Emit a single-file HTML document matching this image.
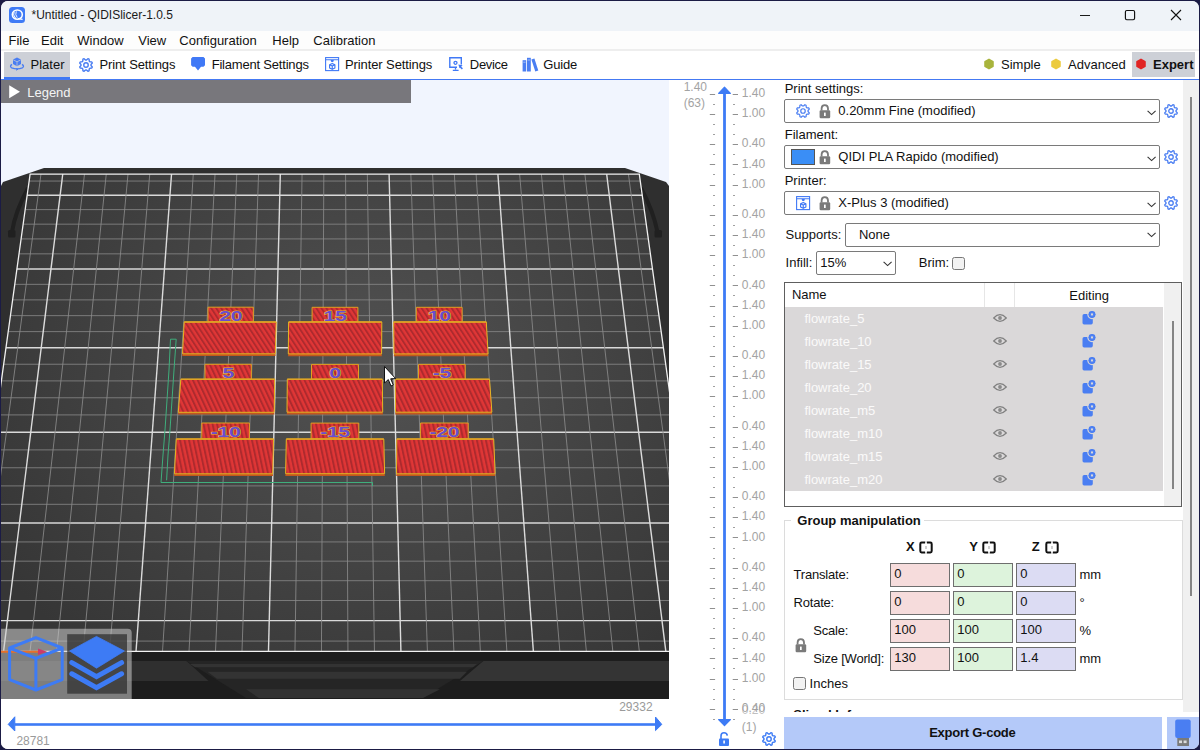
<!DOCTYPE html><html><head><meta charset="utf-8"><style>
html,body{margin:0;padding:0;width:1200px;height:750px;overflow:hidden;background:#1b1b45;}
#win{position:absolute;left:1px;top:1px;width:1198px;height:748px;border-radius:7px;overflow:hidden;background:#ffffff;}
.t{position:absolute;white-space:nowrap;line-height:1;font-family:"Liberation Sans",sans-serif;}
svg{position:absolute;overflow:visible}
</style></head><body><div id="win">
<div style="position:absolute;left:-1px;top:-1px;width:1200px;height:750px;">
<div style="position:absolute;left:0px;top:0px;width:1200px;height:31px;background:#eff3f8;"></div>
<svg style="left:9px;top:7px" width="16" height="16" viewBox="0 0 16 16">
<rect x="0" y="0" width="16" height="16" rx="3.5" fill="#3f7bf6"/>
<ellipse cx="8.3" cy="7.6" rx="5" ry="4.6" fill="none" stroke="#fff" stroke-width="1.6"/>
<path d="M5.2 4.6 Q3.4 8 6.6 11.2" fill="none" stroke="#fff" stroke-width="1"/>
<path d="M7.3 4.3 Q5.8 7.6 8.2 10.6" fill="none" stroke="#fff" stroke-width="0.9"/>
<path d="M9 11.7 L13.6 12.3" stroke="#fff" stroke-width="1.2"/>
</svg>
<div class="t" style="left:31.5px;top:9.24px;font-size:12px;color:#1a1a1a;font-weight:normal;">*Untitled - QIDISlicer-1.0.5</div>
<svg style="left:1078px;top:7px" width="18" height="16"><path d="M2 8.5 H12" stroke="#1a1a1a" stroke-width="1"/></svg>
<svg style="left:1124px;top:9px" width="14" height="14"><rect x="1.4" y="1.5" width="9.2" height="9.2" rx="1.4" fill="none" stroke="#111" stroke-width="1.15"/></svg>
<svg style="left:1170px;top:9px" width="14" height="14"><path d="M1 1 L11 11 M11 1 L1 11" stroke="#111" stroke-width="1.1"/></svg>
<div style="position:absolute;left:0px;top:31px;width:1200px;height:18px;background:#fdfdfd;"></div>
<div style="position:absolute;left:0px;top:49px;width:1200px;height:2px;background:#eeeeee;"></div>
<div class="t" style="left:8.5px;top:33.80px;font-size:13px;color:#111111;font-weight:normal;">File</div>
<div class="t" style="left:41.0px;top:33.80px;font-size:13px;color:#111111;font-weight:normal;">Edit</div>
<div class="t" style="left:77.3px;top:33.80px;font-size:13px;color:#111111;font-weight:normal;">Window</div>
<div class="t" style="left:138.3px;top:33.80px;font-size:13px;color:#111111;font-weight:normal;">View</div>
<div class="t" style="left:179.3px;top:33.80px;font-size:13px;color:#111111;font-weight:normal;">Configuration</div>
<div class="t" style="left:272.3px;top:33.80px;font-size:13px;color:#111111;font-weight:normal;">Help</div>
<div class="t" style="left:313.3px;top:33.80px;font-size:13px;color:#111111;font-weight:normal;">Calibration</div>
<div style="position:absolute;left:0px;top:51px;width:1200px;height:28px;background:#ffffff;"></div>
<div style="position:absolute;left:4px;top:52px;width:66px;height:25px;background:#cdd0d7;"></div>
<div style="position:absolute;left:4px;top:77px;width:66px;height:2px;background:#3e78f4;"></div>
<div style="position:absolute;left:0px;top:79px;width:1200px;height:1px;background:#4479f3;"></div>
<svg style="left:8px;top:56px" width="18" height="16" viewBox="0 0 18 16">
<path d="M9 1.5 L13 3.6 L13 8 L9 10.2 L5 8 L5 3.6 Z" fill="#4a7ef2"/>
<path d="M9 5.8 L9 10 M5.2 3.8 L9 5.8 L12.8 3.8" stroke="#cdd0d7" stroke-width="0.7" fill="none"/>
<path d="M4 8.4 Q1.2 10.2 3.6 11.8 Q9 14 14.4 11.8 Q16.8 10.2 14 8.4" fill="none" stroke="#4a7ef2" stroke-width="1.3"/>
<path d="M8 12.6 L10 13.2 L8 14.2" fill="none" stroke="#4a7ef2" stroke-width="1"/>
</svg>
<div class="t" style="left:30.5px;top:58.00px;font-size:13px;color:#111111;font-weight:normal;">Plater</div>
<svg style="left:79px;top:57.5px" width="14" height="14" viewBox="0 0 14 14"><path d="M13.30 8.91 L12.80 10.10 L10.90 10.20 L10.20 10.90 L10.10 12.80 L8.91 13.30 L7.49 12.02 L6.51 12.02 L5.09 13.30 L3.90 12.80 L3.80 10.90 L3.10 10.20 L1.20 10.10 L0.70 8.91 L1.98 7.49 L1.98 6.51 L0.70 5.09 L1.20 3.90 L3.10 3.80 L3.80 3.10 L3.90 1.20 L5.09 0.70 L6.51 1.98 L7.49 1.98 L8.91 0.70 L10.10 1.20 L10.20 3.10 L10.90 3.80 L12.80 3.90 L13.30 5.09 L12.02 6.51 L12.02 7.49Z" fill="none" stroke="#4a7ef2" stroke-width="1.4" stroke-linejoin="round"/><circle cx="7.0" cy="7.0" r="2.24" fill="none" stroke="#4a7ef2" stroke-width="1.4"/></svg>
<div class="t" style="left:99.4px;top:58.00px;font-size:13px;color:#111111;font-weight:normal;letter-spacing:-0.1px;">Print Settings</div>
<svg style="left:190px;top:56px" width="16" height="16" viewBox="0 0 16 16">
<path d="M2.6 1 H13.5 L15 2.5 V9.2 L13.5 10.7 H11 L8 14.6 L5 10.7 H2.6 L1.1 9.2 V2.5 Z" fill="#4079f6"/>
</svg>
<div class="t" style="left:211.7px;top:58.00px;font-size:13px;color:#111111;font-weight:normal;letter-spacing:-0.2px;">Filament Settings</div>
<svg style="left:325px;top:57px" width="15" height="15" viewBox="0 0 15 15">
<rect x="0.6" y="0.6" width="13" height="13" fill="none" stroke="#4079f6" stroke-width="1.1"/>
<path d="M0.6 2.7 H13.6" stroke="#4079f6" stroke-width="1.1"/>
<path d="M5.6 3 H8.9 L8.2 5.1 H6.3 Z" fill="#4079f6"/>
<path d="M7.25 6.4 L9.9 7.7 V10.9 L7.25 12.3 L4.6 10.9 V7.7 Z M4.6 7.7 L7.25 9.1 L9.9 7.7 M7.25 9.1 V12.3" fill="none" stroke="#4079f6" stroke-width="1.15" stroke-linejoin="round"/>
</svg>
<div class="t" style="left:345.0px;top:58.00px;font-size:13px;color:#111111;font-weight:normal;letter-spacing:-0.1px;">Printer Settings</div>
<svg style="left:449px;top:56px" width="16" height="16" viewBox="0 0 16 16">
<path d="M8 11.2 H0.8 V1.7 H12.3 V8.6" fill="none" stroke="#4079f6" stroke-width="1.4"/>
<circle cx="6.5" cy="6.8" r="1.5" fill="none" stroke="#4079f6" stroke-width="1.3"/>
<path d="M9.3 8.4 L13.6 9.3 L10.6 12.2 Z" fill="#4079f6"/>
<path d="M11 10.6 L13.4 12.9" stroke="#4079f6" stroke-width="1.5"/>
<path d="M6.5 11.2 V13.6 M3.8 14.3 H9.6" stroke="#4079f6" stroke-width="1.3"/>
</svg>
<div class="t" style="left:469.8px;top:58.00px;font-size:13px;color:#111111;font-weight:normal;letter-spacing:-0.3px;">Device</div>
<svg style="left:522px;top:57px" width="17" height="15" viewBox="0 0 17 15">
<rect x="0.6" y="3.2" width="3.6" height="11.3" fill="#4a7ef2"/>
<rect x="5" y="0.8" width="3.8" height="13.7" fill="#4a7ef2"/>
<path d="M9.4 2.4 L12.4 1.5 L16.3 13.6 L13.3 14.5 Z" fill="#4a7ef2"/>
<path d="M1.2 5.2 H3.6 M5.6 3 H8.2" stroke="#b8ccf8" stroke-width="0.8"/>
</svg>
<div class="t" style="left:543.3px;top:58.00px;font-size:13px;color:#111111;font-weight:normal;letter-spacing:-0.2px;">Guide</div>
<div style="position:absolute;left:1132px;top:52px;width:63px;height:25px;background:#cdd0d7;"></div>
<svg style="left:0;top:0" width="1200" height="750"><polygon points="992.98,66.30 989.00,68.60 985.02,66.30 985.02,61.70 989.00,59.40 992.98,61.70" fill="#a8b43c" stroke="#a8b43c" stroke-width="1.6" stroke-linejoin="round"/></svg>
<div class="t" style="left:1001.0px;top:58.00px;font-size:13px;color:#111111;font-weight:normal;">Simple</div>
<svg style="left:0;top:0" width="1200" height="750"><polygon points="1059.98,66.30 1056.00,68.60 1052.02,66.30 1052.02,61.70 1056.00,59.40 1059.98,61.70" fill="#eccb3e" stroke="#eccb3e" stroke-width="1.6" stroke-linejoin="round"/></svg>
<div class="t" style="left:1068.0px;top:58.00px;font-size:13px;color:#111111;font-weight:normal;">Advanced</div>
<svg style="left:0;top:0" width="1200" height="750"><polygon points="1144.98,66.30 1141.00,68.60 1137.02,66.30 1137.02,61.70 1141.00,59.40 1144.98,61.70" fill="#e12424" stroke="#e12424" stroke-width="1.6" stroke-linejoin="round"/></svg>
<div class="t" style="left:1153.0px;top:58.00px;font-size:13px;color:#111111;font-weight:bold;">Expert</div>
<div style="position:absolute;left:1px;top:80px;width:668px;height:619px;background:#f1f5fe;"></div>
<svg style="left:1px;top:80px" width="668" height="619" viewBox="1 80 668 619"><defs>
<radialGradient id="bedg" cx="375" cy="370" r="440" gradientUnits="userSpaceOnUse" gradientTransform="translate(375 370) scale(1 0.85) translate(-375 -370)">
<stop offset="0" stop-color="#525252"/><stop offset="0.45" stop-color="#454545"/><stop offset="1" stop-color="#363636"/></radialGradient>
<clipPath id="cvclip"><rect x="1" y="80" width="668" height="619"/></clipPath>
<pattern id="strp0" width="4.2" height="10" patternUnits="userSpaceOnUse" patternTransform="rotate(-33)"><rect width="4.2" height="10" fill="#e03636"/><rect x="0" width="1.89" height="10" fill="#ad2a2e"/></pattern><pattern id="strp1" width="4.4" height="10" patternUnits="userSpaceOnUse" patternTransform="rotate(-25)"><rect width="4.4" height="10" fill="#e03636"/><rect x="0" width="1.98" height="10" fill="#ad2a2e"/></pattern><pattern id="strp2" width="4.4" height="10" patternUnits="userSpaceOnUse" patternTransform="rotate(-12)"><rect width="4.4" height="10" fill="#e03636"/><rect x="0" width="1.98" height="10" fill="#ad2a2e"/></pattern></defs><g clip-path="url(#cvclip)"><polygon points="44,168 625,168 666,182 669,186 669,699 1,699 1,186 3,182" fill="#2f2f2f"/><polygon points="30.1,174.1 639.3,174.1 705.6,651.4 -36.2,651.4" fill="url(#bedg)"/><path d="M28 188 Q22 199 17.5 211 Q13.5 222 12 232" fill="none" stroke="#202020" stroke-width="4"/><rect x="8" y="230" width="7.5" height="7.5" rx="1.5" fill="#202020"/><path d="M641 188 Q647 199 651.5 211 Q655.5 222 657.5 232" fill="none" stroke="#202020" stroke-width="4"/><rect x="654.5" y="230" width="7.5" height="7.5" rx="1.5" fill="#202020"/><line x1="29.13" y1="181.06" x2="640.27" y2="181.06" stroke="#858585" stroke-width="0.85"/><line x1="27.16" y1="195.24" x2="642.24" y2="195.24" stroke="#d9d9d9" stroke-width="1.4"/><line x1="25.17" y1="209.61" x2="644.23" y2="209.61" stroke="#858585" stroke-width="0.85"/><line x1="23.15" y1="224.16" x2="646.25" y2="224.16" stroke="#858585" stroke-width="0.85"/><line x1="21.10" y1="238.91" x2="648.30" y2="238.91" stroke="#858585" stroke-width="0.85"/><line x1="19.03" y1="253.85" x2="650.37" y2="253.85" stroke="#858585" stroke-width="0.85"/><line x1="16.93" y1="268.99" x2="652.47" y2="268.99" stroke="#d9d9d9" stroke-width="1.4"/><line x1="14.80" y1="284.34" x2="654.60" y2="284.34" stroke="#858585" stroke-width="0.85"/><line x1="12.64" y1="299.89" x2="656.76" y2="299.89" stroke="#858585" stroke-width="0.85"/><line x1="10.45" y1="315.65" x2="658.95" y2="315.65" stroke="#858585" stroke-width="0.85"/><line x1="8.23" y1="331.62" x2="661.17" y2="331.62" stroke="#858585" stroke-width="0.85"/><line x1="5.98" y1="347.82" x2="663.42" y2="347.82" stroke="#d9d9d9" stroke-width="1.4"/><line x1="3.70" y1="364.24" x2="665.70" y2="364.24" stroke="#858585" stroke-width="0.85"/><line x1="1.39" y1="380.90" x2="668.01" y2="380.90" stroke="#858585" stroke-width="0.85"/><line x1="-0.95" y1="397.78" x2="670.35" y2="397.78" stroke="#858585" stroke-width="0.85"/><line x1="-3.33" y1="414.91" x2="672.73" y2="414.91" stroke="#858585" stroke-width="0.85"/><line x1="-5.74" y1="432.28" x2="675.14" y2="432.28" stroke="#d9d9d9" stroke-width="1.4"/><line x1="-8.19" y1="449.89" x2="677.59" y2="449.89" stroke="#858585" stroke-width="0.85"/><line x1="-10.67" y1="467.77" x2="680.07" y2="467.77" stroke="#858585" stroke-width="0.85"/><line x1="-13.19" y1="485.90" x2="682.59" y2="485.90" stroke="#858585" stroke-width="0.85"/><line x1="-15.74" y1="504.30" x2="685.14" y2="504.30" stroke="#858585" stroke-width="0.85"/><line x1="-18.33" y1="522.98" x2="687.73" y2="522.98" stroke="#d9d9d9" stroke-width="1.4"/><line x1="-20.96" y1="541.93" x2="690.36" y2="541.93" stroke="#858585" stroke-width="0.85"/><line x1="-23.63" y1="561.16" x2="693.03" y2="561.16" stroke="#858585" stroke-width="0.85"/><line x1="-26.35" y1="580.69" x2="695.75" y2="580.69" stroke="#858585" stroke-width="0.85"/><line x1="-29.10" y1="600.52" x2="698.50" y2="600.52" stroke="#858585" stroke-width="0.85"/><line x1="-31.89" y1="620.64" x2="701.29" y2="620.64" stroke="#d9d9d9" stroke-width="1.4"/><line x1="-34.73" y1="641.08" x2="704.13" y2="641.08" stroke="#858585" stroke-width="0.85"/><line x1="40.98" y1="174.1" x2="-22.92" y2="651.42" stroke="#8a8a8a" stroke-width="0.85"/><line x1="62.74" y1="174.1" x2="3.57" y2="651.42" stroke="#dcdcdc" stroke-width="1.4"/><line x1="84.49" y1="174.1" x2="30.06" y2="651.42" stroke="#8a8a8a" stroke-width="0.85"/><line x1="106.25" y1="174.1" x2="56.55" y2="651.42" stroke="#8a8a8a" stroke-width="0.85"/><line x1="128.01" y1="174.1" x2="83.04" y2="651.42" stroke="#8a8a8a" stroke-width="0.85"/><line x1="149.76" y1="174.1" x2="109.53" y2="651.42" stroke="#8a8a8a" stroke-width="0.85"/><line x1="171.52" y1="174.1" x2="136.02" y2="651.42" stroke="#dcdcdc" stroke-width="1.4"/><line x1="193.28" y1="174.1" x2="162.51" y2="651.42" stroke="#8a8a8a" stroke-width="0.85"/><line x1="215.04" y1="174.1" x2="189.00" y2="651.42" stroke="#8a8a8a" stroke-width="0.85"/><line x1="236.79" y1="174.1" x2="215.49" y2="651.42" stroke="#8a8a8a" stroke-width="0.85"/><line x1="258.55" y1="174.1" x2="241.98" y2="651.42" stroke="#8a8a8a" stroke-width="0.85"/><line x1="280.31" y1="174.1" x2="268.47" y2="651.42" stroke="#dcdcdc" stroke-width="1.4"/><line x1="302.06" y1="174.1" x2="294.96" y2="651.42" stroke="#8a8a8a" stroke-width="0.85"/><line x1="323.82" y1="174.1" x2="321.45" y2="651.42" stroke="#8a8a8a" stroke-width="0.85"/><line x1="345.58" y1="174.1" x2="347.95" y2="651.42" stroke="#8a8a8a" stroke-width="0.85"/><line x1="367.34" y1="174.1" x2="374.44" y2="651.42" stroke="#8a8a8a" stroke-width="0.85"/><line x1="389.09" y1="174.1" x2="400.93" y2="651.42" stroke="#dcdcdc" stroke-width="1.4"/><line x1="410.85" y1="174.1" x2="427.42" y2="651.42" stroke="#8a8a8a" stroke-width="0.85"/><line x1="432.61" y1="174.1" x2="453.91" y2="651.42" stroke="#8a8a8a" stroke-width="0.85"/><line x1="454.36" y1="174.1" x2="480.40" y2="651.42" stroke="#8a8a8a" stroke-width="0.85"/><line x1="476.12" y1="174.1" x2="506.89" y2="651.42" stroke="#8a8a8a" stroke-width="0.85"/><line x1="497.88" y1="174.1" x2="533.38" y2="651.42" stroke="#dcdcdc" stroke-width="1.4"/><line x1="519.64" y1="174.1" x2="559.87" y2="651.42" stroke="#8a8a8a" stroke-width="0.85"/><line x1="541.39" y1="174.1" x2="586.36" y2="651.42" stroke="#8a8a8a" stroke-width="0.85"/><line x1="563.15" y1="174.1" x2="612.85" y2="651.42" stroke="#8a8a8a" stroke-width="0.85"/><line x1="584.91" y1="174.1" x2="639.34" y2="651.42" stroke="#8a8a8a" stroke-width="0.85"/><line x1="606.66" y1="174.1" x2="665.83" y2="651.42" stroke="#dcdcdc" stroke-width="1.4"/><line x1="628.42" y1="174.1" x2="692.32" y2="651.42" stroke="#8a8a8a" stroke-width="0.85"/><polyline points="-36.2,651.4 30.1,174.1 639.3,174.1 705.6,651.4" fill="none" stroke="#f0f0f0" stroke-width="1.3"/><rect x="1" y="652.0" width="668" height="47.6" fill="#1d1d1d"/><line x1="1" y1="651.42" x2="669" y2="651.42" stroke="#f2f2f2" stroke-width="1.4"/><polygon points="1,661 186.5,661 208.5,681 1,681" fill="#2f2f2f"/><polygon points="483.3,661 669,661 669,681 460,681" fill="#343434"/><polygon points="186.5,661 483.3,661 422.8,698 246,698" fill="#252525"/><polygon points="190,664 477,664 473,667.2 195,667.2" fill="#333333"/><polygon points="207.5,671.8 467,671.8 460,678.8 217,678.8" fill="#333333"/><polygon points="246,689.3 440,689.3 423,698 259,698" fill="#333333"/><polyline points="161,482.5 372.5,482.5 372.5,486" fill="none" stroke="#3fae7c" stroke-width="1"/><polyline points="161,482.5 163,455 165,430 167,400 169,370 170.5,339.2 176.2,339.2 174,370 172,400 170,430 168,455 166.6,480.3" fill="none" stroke="#3fae7c" stroke-width="1"/><polygon points="208,307.2 253.3,307.2 253.3,322 208,322" fill="url(#strp0)" stroke="#e0a020" stroke-width="1"/><polygon points="182.5,353.8 275.3,353.8 275.6,356.1 182.2,356.1" fill="#c4561c"/><polygon points="184.2,322 276.2,322 275.3,353.8 182.5,353.8" fill="url(#strp0)" stroke="#e6b422" stroke-width="1"/><line x1="184.2" y1="322" x2="276.2" y2="322" stroke="#e0a424" stroke-width="1.5"/><text transform="translate(230.7,320.6) scale(1.38,1)" x="0" y="0" text-anchor="middle" font-family="Liberation Sans" font-weight="bold" font-size="15.5" fill="#6a4bcf" stroke="#e3b930" stroke-width="1.1" paint-order="stroke" letter-spacing="-0.3">20</text><polygon points="312.1,307.3 357.9,307.3 357.9,322 312.1,322" fill="url(#strp0)" stroke="#e0a020" stroke-width="1"/><polygon points="288.3,353.9 381.6,353.9 381.90000000000003,356.2 288.0,356.2" fill="#c4561c"/><polygon points="288.6,322 381.8,322 381.6,353.9 288.3,353.9" fill="url(#strp0)" stroke="#e6b422" stroke-width="1"/><line x1="288.6" y1="322" x2="381.8" y2="322" stroke="#e0a424" stroke-width="1.5"/><text transform="translate(335.0,320.6) scale(1.38,1)" x="0" y="0" text-anchor="middle" font-family="Liberation Sans" font-weight="bold" font-size="15.5" fill="#6a4bcf" stroke="#e3b930" stroke-width="1.1" paint-order="stroke" letter-spacing="-0.3">15</text><polygon points="416.3,307.3 462.1,307.3 462.1,322 416.3,322" fill="url(#strp0)" stroke="#e0a020" stroke-width="1"/><polygon points="394,353.9 488.1,353.9 488.40000000000003,356.2 393.7,356.2" fill="#c4561c"/><polygon points="393.7,322 486.3,322 488.1,353.9 394,353.9" fill="url(#strp0)" stroke="#e6b422" stroke-width="1"/><line x1="393.7" y1="322" x2="486.3" y2="322" stroke="#e0a424" stroke-width="1.5"/><text transform="translate(439.2,320.6) scale(1.38,1)" x="0" y="0" text-anchor="middle" font-family="Liberation Sans" font-weight="bold" font-size="15.5" fill="#6a4bcf" stroke="#e3b930" stroke-width="1.1" paint-order="stroke" letter-spacing="-0.3">10</text><polygon points="205,364.3 251.3,364.3 251.3,379.3 205,379.3" fill="url(#strp1)" stroke="#e0a020" stroke-width="1"/><polygon points="178.3,412.3 274.2,412.3 274.5,414.6 178.0,414.6" fill="#c4561c"/><polygon points="180.8,379.3 274.7,379.3 274.2,412.3 178.3,412.3" fill="url(#strp1)" stroke="#e6b422" stroke-width="1"/><line x1="180.8" y1="379.3" x2="274.7" y2="379.3" stroke="#e0a424" stroke-width="1.5"/><text transform="translate(228.2,377.8) scale(1.38,1)" x="0" y="0" text-anchor="middle" font-family="Liberation Sans" font-weight="bold" font-size="15.5" fill="#6a4bcf" stroke="#e3b930" stroke-width="1.1" paint-order="stroke" letter-spacing="-0.3">5</text><polygon points="311.5,364.4 358.5,364.4 358.5,379.3 311.5,379.3" fill="url(#strp1)" stroke="#e0a020" stroke-width="1"/><polygon points="287,412.2 382.7,412.2 383.0,414.5 286.7,414.5" fill="#c4561c"/><polygon points="287.3,379.3 382.3,379.3 382.7,412.2 287,412.2" fill="url(#strp1)" stroke="#e6b422" stroke-width="1"/><line x1="287.3" y1="379.3" x2="382.3" y2="379.3" stroke="#e0a424" stroke-width="1.5"/><text transform="translate(335.0,377.9) scale(1.38,1)" x="0" y="0" text-anchor="middle" font-family="Liberation Sans" font-weight="bold" font-size="15.5" fill="#6a4bcf" stroke="#e3b930" stroke-width="1.1" paint-order="stroke" letter-spacing="-0.3">0</text><polygon points="418.5,364.4 465.2,364.4 465.2,379.3 418.5,379.3" fill="url(#strp1)" stroke="#e0a020" stroke-width="1"/><polygon points="395.5,412.2 491.9,412.2 492.2,414.5 395.2,414.5" fill="#c4561c"/><polygon points="395.2,379.3 489.5,379.3 491.9,412.2 395.5,412.2" fill="url(#strp1)" stroke="#e6b422" stroke-width="1"/><line x1="395.2" y1="379.3" x2="489.5" y2="379.3" stroke="#e0a424" stroke-width="1.5"/><text transform="translate(441.9,377.9) scale(1.38,1)" x="0" y="0" text-anchor="middle" font-family="Liberation Sans" font-weight="bold" font-size="15.5" fill="#6a4bcf" stroke="#e3b930" stroke-width="1.1" paint-order="stroke" letter-spacing="-0.3">-5</text><polygon points="201.8,423 249.4,423 249.4,439.1 201.8,439.1" fill="url(#strp2)" stroke="#e0a020" stroke-width="1"/><polygon points="174.4,473.8 272.7,473.8 273.0,476.1 174.1,476.1" fill="#c4561c"/><polygon points="176.3,439.1 273.5,439.1 272.7,473.8 174.4,473.8" fill="url(#strp2)" stroke="#e6b422" stroke-width="1"/><line x1="176.3" y1="439.1" x2="273.5" y2="439.1" stroke="#e0a424" stroke-width="1.5"/><text transform="translate(225.6,437.1) scale(1.38,1)" x="0" y="0" text-anchor="middle" font-family="Liberation Sans" font-weight="bold" font-size="15.5" fill="#6a4bcf" stroke="#e3b930" stroke-width="1.1" paint-order="stroke" letter-spacing="-0.3">-10</text><polygon points="311.1,423.1 358.8,423.1 358.8,439.1 311.1,439.1" fill="url(#strp2)" stroke="#e0a020" stroke-width="1"/><polygon points="285.6,473.7 384.6,473.7 384.90000000000003,476.0 285.3,476.0" fill="#c4561c"/><polygon points="286.3,439.1 383.8,439.1 384.6,473.7 285.6,473.7" fill="url(#strp2)" stroke="#e6b422" stroke-width="1"/><line x1="286.3" y1="439.1" x2="383.8" y2="439.1" stroke="#e0a424" stroke-width="1.5"/><text transform="translate(335.0,437.1) scale(1.38,1)" x="0" y="0" text-anchor="middle" font-family="Liberation Sans" font-weight="bold" font-size="15.5" fill="#6a4bcf" stroke="#e3b930" stroke-width="1.1" paint-order="stroke" letter-spacing="-0.3">-15</text><polygon points="420.6,423 468.2,423 468.2,439.1 420.6,439.1" fill="url(#strp2)" stroke="#e0a020" stroke-width="1"/><polygon points="396.5,473.8 495.1,473.8 495.40000000000003,476.1 396.2,476.1" fill="#c4561c"/><polygon points="396.8,439.1 493.7,439.1 495.1,473.8 396.5,473.8" fill="url(#strp2)" stroke="#e6b422" stroke-width="1"/><line x1="396.8" y1="439.1" x2="493.7" y2="439.1" stroke="#e0a424" stroke-width="1.5"/><text transform="translate(444.4,437.1) scale(1.38,1)" x="0" y="0" text-anchor="middle" font-family="Liberation Sans" font-weight="bold" font-size="15.5" fill="#6a4bcf" stroke="#e3b930" stroke-width="1.1" paint-order="stroke" letter-spacing="-0.3">-20</text><path d="M384.5 366.5 L384.5 383 L388.3 379.6 L391 386 L393.3 385 L390.7 378.8 L395.7 378.6 Z" fill="#ffffff" stroke="#111" stroke-width="1"/></g></svg>
<svg style="left:0;top:620px" width="140" height="80" viewBox="0 620 140 80">
<path d="M1 628.7 H127.7 Q131.7 628.7 131.7 632.7 V699 H1 Z" fill="rgba(205,205,205,0.55)"/>
<rect x="67.2" y="634.2" width="59.8" height="59.5" fill="rgba(45,45,45,0.72)"/>
<path d="M1 651.8 H44" stroke="#e8702a" stroke-width="2"/>
<path d="M38 648.5 L47 651.8 L38 655" fill="#cc3a6a"/>
<path d="M35.9 637.6 L62.2 648 V679.6 L35.9 690 L9.6 679.6 V648 Z M9.6 648 L35.9 658.4 L62.2 648 M35.9 658.4 V690" fill="none" stroke="#3d7bf5" stroke-width="3" stroke-linejoin="round"/>
<path d="M96.5 636.4 L124.4 651 L96.5 668.2 L69.6 651 Z" fill="#3d7bf5" stroke="#3d7bf5" stroke-width="0.8" stroke-linejoin="round"/>
<path d="M71.8 662.6 L96.5 676.6 L121.6 662.6" fill="none" stroke="#3d7bf5" stroke-width="5" stroke-linejoin="miter" stroke-linecap="round"/>
<path d="M71.8 673.8 L96.5 687.6 L121.6 673.8" fill="none" stroke="#3d7bf5" stroke-width="5" stroke-linejoin="miter" stroke-linecap="round"/>
</svg>
<div style="position:absolute;left:1px;top:80px;width:410px;height:23px;background:#78777c;"></div>
<svg style="left:8px;top:85px" width="14" height="14"><path d="M1.2 0.3 L12 6.8 L1.2 13.2 Z" fill="#ffffff"/></svg>
<div class="t" style="left:27.2px;top:86.00px;font-size:13px;color:#f4f4f4;font-weight:normal;">Legend</div>
<div style="position:absolute;left:1px;top:699px;width:668px;height:50px;background:#ffffff;"></div>
<svg style="left:0;top:700px" width="680" height="40" viewBox="0 700 680 40">
<rect x="15" y="723.2" width="640" height="2.6" fill="#3d7bf5"/>
<path d="M8.2 724.4 L14.8 716.8 V731 Z" fill="#3d7bf5" stroke="#3d7bf5" stroke-width="1" stroke-linejoin="round"/>
<path d="M661.8 724.4 L655.5 717 V730.6 Z" fill="#3d7bf5" stroke="#3d7bf5" stroke-width="1" stroke-linejoin="round"/>
</svg>
<div class="t" style="left:16.4px;top:735.44px;font-size:12px;color:#9a9a9a;font-weight:normal;">28781</div>
<div class="t" style="left:619.2px;top:700.64px;font-size:12px;color:#9a9a9a;font-weight:normal;">29332</div>
<div style="position:absolute;left:669px;top:80px;width:115px;height:669px;background:#ffffff;"></div>
<svg style="left:669px;top:80px" width="115" height="670" viewBox="669 80 115 670"><rect x="709.8" y="94" width="5.3" height="1" fill="#909090"/><rect x="732.7" y="94" width="5.3" height="1" fill="#909090"/><rect x="713" y="104" width="2" height="1" fill="#a0a0a0"/><rect x="733" y="104" width="2" height="1" fill="#a0a0a0"/><rect x="709.8" y="114" width="5.3" height="1" fill="#909090"/><rect x="732.7" y="114" width="5.3" height="1" fill="#909090"/><rect x="713" y="124" width="2" height="1" fill="#a0a0a0"/><rect x="733" y="124" width="2" height="1" fill="#a0a0a0"/><rect x="713" y="134" width="2" height="1" fill="#a0a0a0"/><rect x="733" y="134" width="2" height="1" fill="#a0a0a0"/><rect x="709.8" y="144" width="5.3" height="1" fill="#909090"/><rect x="732.7" y="144" width="5.3" height="1" fill="#909090"/><rect x="713" y="154" width="2" height="1" fill="#a0a0a0"/><rect x="733" y="154" width="2" height="1" fill="#a0a0a0"/><rect x="709.8" y="164" width="5.3" height="1" fill="#909090"/><rect x="732.7" y="164" width="5.3" height="1" fill="#909090"/><rect x="713" y="174" width="2" height="1" fill="#a0a0a0"/><rect x="733" y="174" width="2" height="1" fill="#a0a0a0"/><rect x="709.8" y="185" width="5.3" height="1" fill="#909090"/><rect x="732.7" y="185" width="5.3" height="1" fill="#909090"/><rect x="713" y="195" width="2" height="1" fill="#a0a0a0"/><rect x="733" y="195" width="2" height="1" fill="#a0a0a0"/><rect x="713" y="205" width="2" height="1" fill="#a0a0a0"/><rect x="733" y="205" width="2" height="1" fill="#a0a0a0"/><rect x="709.8" y="215" width="5.3" height="1" fill="#909090"/><rect x="732.7" y="215" width="5.3" height="1" fill="#909090"/><rect x="713" y="225" width="2" height="1" fill="#a0a0a0"/><rect x="733" y="225" width="2" height="1" fill="#a0a0a0"/><rect x="709.8" y="235" width="5.3" height="1" fill="#909090"/><rect x="732.7" y="235" width="5.3" height="1" fill="#909090"/><rect x="713" y="245" width="2" height="1" fill="#a0a0a0"/><rect x="733" y="245" width="2" height="1" fill="#a0a0a0"/><rect x="709.8" y="255" width="5.3" height="1" fill="#909090"/><rect x="732.7" y="255" width="5.3" height="1" fill="#909090"/><rect x="713" y="265" width="2" height="1" fill="#a0a0a0"/><rect x="733" y="265" width="2" height="1" fill="#a0a0a0"/><rect x="713" y="275" width="2" height="1" fill="#a0a0a0"/><rect x="733" y="275" width="2" height="1" fill="#a0a0a0"/><rect x="709.8" y="285" width="5.3" height="1" fill="#909090"/><rect x="732.7" y="285" width="5.3" height="1" fill="#909090"/><rect x="713" y="295" width="2" height="1" fill="#a0a0a0"/><rect x="733" y="295" width="2" height="1" fill="#a0a0a0"/><rect x="709.8" y="306" width="5.3" height="1" fill="#909090"/><rect x="732.7" y="306" width="5.3" height="1" fill="#909090"/><rect x="713" y="316" width="2" height="1" fill="#a0a0a0"/><rect x="733" y="316" width="2" height="1" fill="#a0a0a0"/><rect x="709.8" y="326" width="5.3" height="1" fill="#909090"/><rect x="732.7" y="326" width="5.3" height="1" fill="#909090"/><rect x="713" y="336" width="2" height="1" fill="#a0a0a0"/><rect x="733" y="336" width="2" height="1" fill="#a0a0a0"/><rect x="713" y="346" width="2" height="1" fill="#a0a0a0"/><rect x="733" y="346" width="2" height="1" fill="#a0a0a0"/><rect x="709.8" y="356" width="5.3" height="1" fill="#909090"/><rect x="732.7" y="356" width="5.3" height="1" fill="#909090"/><rect x="713" y="366" width="2" height="1" fill="#a0a0a0"/><rect x="733" y="366" width="2" height="1" fill="#a0a0a0"/><rect x="709.8" y="376" width="5.3" height="1" fill="#909090"/><rect x="732.7" y="376" width="5.3" height="1" fill="#909090"/><rect x="713" y="386" width="2" height="1" fill="#a0a0a0"/><rect x="733" y="386" width="2" height="1" fill="#a0a0a0"/><rect x="709.8" y="396" width="5.3" height="1" fill="#909090"/><rect x="732.7" y="396" width="5.3" height="1" fill="#909090"/><rect x="713" y="406" width="2" height="1" fill="#a0a0a0"/><rect x="733" y="406" width="2" height="1" fill="#a0a0a0"/><rect x="713" y="416" width="2" height="1" fill="#a0a0a0"/><rect x="733" y="416" width="2" height="1" fill="#a0a0a0"/><rect x="709.8" y="427" width="5.3" height="1" fill="#909090"/><rect x="732.7" y="427" width="5.3" height="1" fill="#909090"/><rect x="713" y="437" width="2" height="1" fill="#a0a0a0"/><rect x="733" y="437" width="2" height="1" fill="#a0a0a0"/><rect x="709.8" y="447" width="5.3" height="1" fill="#909090"/><rect x="732.7" y="447" width="5.3" height="1" fill="#909090"/><rect x="713" y="457" width="2" height="1" fill="#a0a0a0"/><rect x="733" y="457" width="2" height="1" fill="#a0a0a0"/><rect x="709.8" y="467" width="5.3" height="1" fill="#909090"/><rect x="732.7" y="467" width="5.3" height="1" fill="#909090"/><rect x="713" y="477" width="2" height="1" fill="#a0a0a0"/><rect x="733" y="477" width="2" height="1" fill="#a0a0a0"/><rect x="713" y="487" width="2" height="1" fill="#a0a0a0"/><rect x="733" y="487" width="2" height="1" fill="#a0a0a0"/><rect x="709.8" y="497" width="5.3" height="1" fill="#909090"/><rect x="732.7" y="497" width="5.3" height="1" fill="#909090"/><rect x="713" y="507" width="2" height="1" fill="#a0a0a0"/><rect x="733" y="507" width="2" height="1" fill="#a0a0a0"/><rect x="709.8" y="517" width="5.3" height="1" fill="#909090"/><rect x="732.7" y="517" width="5.3" height="1" fill="#909090"/><rect x="713" y="527" width="2" height="1" fill="#a0a0a0"/><rect x="733" y="527" width="2" height="1" fill="#a0a0a0"/><rect x="709.8" y="537" width="5.3" height="1" fill="#909090"/><rect x="732.7" y="537" width="5.3" height="1" fill="#909090"/><rect x="713" y="548" width="2" height="1" fill="#a0a0a0"/><rect x="733" y="548" width="2" height="1" fill="#a0a0a0"/><rect x="713" y="558" width="2" height="1" fill="#a0a0a0"/><rect x="733" y="558" width="2" height="1" fill="#a0a0a0"/><rect x="709.8" y="568" width="5.3" height="1" fill="#909090"/><rect x="732.7" y="568" width="5.3" height="1" fill="#909090"/><rect x="713" y="578" width="2" height="1" fill="#a0a0a0"/><rect x="733" y="578" width="2" height="1" fill="#a0a0a0"/><rect x="709.8" y="588" width="5.3" height="1" fill="#909090"/><rect x="732.7" y="588" width="5.3" height="1" fill="#909090"/><rect x="713" y="598" width="2" height="1" fill="#a0a0a0"/><rect x="733" y="598" width="2" height="1" fill="#a0a0a0"/><rect x="709.8" y="608" width="5.3" height="1" fill="#909090"/><rect x="732.7" y="608" width="5.3" height="1" fill="#909090"/><rect x="713" y="618" width="2" height="1" fill="#a0a0a0"/><rect x="733" y="618" width="2" height="1" fill="#a0a0a0"/><rect x="713" y="628" width="2" height="1" fill="#a0a0a0"/><rect x="733" y="628" width="2" height="1" fill="#a0a0a0"/><rect x="709.8" y="638" width="5.3" height="1" fill="#909090"/><rect x="732.7" y="638" width="5.3" height="1" fill="#909090"/><rect x="713" y="648" width="2" height="1" fill="#a0a0a0"/><rect x="733" y="648" width="2" height="1" fill="#a0a0a0"/><rect x="709.8" y="658" width="5.3" height="1" fill="#909090"/><rect x="732.7" y="658" width="5.3" height="1" fill="#909090"/><rect x="713" y="668" width="2" height="1" fill="#a0a0a0"/><rect x="733" y="668" width="2" height="1" fill="#a0a0a0"/><rect x="709.8" y="679" width="5.3" height="1" fill="#909090"/><rect x="732.7" y="679" width="5.3" height="1" fill="#909090"/><rect x="713" y="689" width="2" height="1" fill="#a0a0a0"/><rect x="733" y="689" width="2" height="1" fill="#a0a0a0"/><rect x="713" y="699" width="2" height="1" fill="#a0a0a0"/><rect x="733" y="699" width="2" height="1" fill="#a0a0a0"/><rect x="709.8" y="709" width="5.3" height="1" fill="#909090"/><rect x="732.7" y="709" width="5.3" height="1" fill="#909090"/><rect x="713" y="719" width="2" height="1" fill="#a0a0a0"/><rect x="733" y="719" width="2" height="1" fill="#a0a0a0"/><rect x="723.1" y="92" width="2.8" height="628" fill="#3d7bf5"/><path d="M724.5 87.2 L730.4 93.3 H718.6 Z" fill="#3d7bf5" stroke="#3d7bf5" stroke-width="1.2" stroke-linejoin="round"/><path d="M724.5 725.7 L730.4 719.6 H718.6 Z" fill="#3d7bf5" stroke="#3d7bf5" stroke-width="1.2" stroke-linejoin="round"/><path d="M721 739 V736 Q721 732.8 724 732.8 Q727 732.8 727.3 735.6" fill="none" stroke="#3d7bf5" stroke-width="1.6"/><rect x="719" y="738.6" width="10" height="7.4" rx="1" fill="#3d7bf5"/><rect x="723.3" y="740.5" width="1.6" height="3" fill="#fff"/></svg>
<div class="t" style="left:741.8px;top:86.94px;font-size:12px;color:#a3a3a3;font-weight:normal;">1.40</div>
<div class="t" style="left:741.8px;top:107.11px;font-size:12px;color:#a3a3a3;font-weight:normal;">1.00</div>
<div class="t" style="left:741.8px;top:137.35px;font-size:12px;color:#a3a3a3;font-weight:normal;">0.40</div>
<div class="t" style="left:741.8px;top:157.52px;font-size:12px;color:#a3a3a3;font-weight:normal;">1.40</div>
<div class="t" style="left:741.8px;top:177.68px;font-size:12px;color:#a3a3a3;font-weight:normal;">1.00</div>
<div class="t" style="left:741.8px;top:207.93px;font-size:12px;color:#a3a3a3;font-weight:normal;">0.40</div>
<div class="t" style="left:741.8px;top:228.09px;font-size:12px;color:#a3a3a3;font-weight:normal;">1.40</div>
<div class="t" style="left:741.8px;top:248.26px;font-size:12px;color:#a3a3a3;font-weight:normal;">1.00</div>
<div class="t" style="left:741.8px;top:278.50px;font-size:12px;color:#a3a3a3;font-weight:normal;">0.40</div>
<div class="t" style="left:741.8px;top:298.67px;font-size:12px;color:#a3a3a3;font-weight:normal;">1.40</div>
<div class="t" style="left:741.8px;top:318.83px;font-size:12px;color:#a3a3a3;font-weight:normal;">1.00</div>
<div class="t" style="left:741.8px;top:349.08px;font-size:12px;color:#a3a3a3;font-weight:normal;">0.40</div>
<div class="t" style="left:741.8px;top:369.25px;font-size:12px;color:#a3a3a3;font-weight:normal;">1.40</div>
<div class="t" style="left:741.8px;top:389.41px;font-size:12px;color:#a3a3a3;font-weight:normal;">1.00</div>
<div class="t" style="left:741.8px;top:419.66px;font-size:12px;color:#a3a3a3;font-weight:normal;">0.40</div>
<div class="t" style="left:741.8px;top:439.82px;font-size:12px;color:#a3a3a3;font-weight:normal;">1.40</div>
<div class="t" style="left:741.8px;top:459.99px;font-size:12px;color:#a3a3a3;font-weight:normal;">1.00</div>
<div class="t" style="left:741.8px;top:490.23px;font-size:12px;color:#a3a3a3;font-weight:normal;">0.40</div>
<div class="t" style="left:741.8px;top:510.40px;font-size:12px;color:#a3a3a3;font-weight:normal;">1.40</div>
<div class="t" style="left:741.8px;top:530.56px;font-size:12px;color:#a3a3a3;font-weight:normal;">1.00</div>
<div class="t" style="left:741.8px;top:560.81px;font-size:12px;color:#a3a3a3;font-weight:normal;">0.40</div>
<div class="t" style="left:741.8px;top:580.97px;font-size:12px;color:#a3a3a3;font-weight:normal;">1.40</div>
<div class="t" style="left:741.8px;top:601.14px;font-size:12px;color:#a3a3a3;font-weight:normal;">1.00</div>
<div class="t" style="left:741.8px;top:631.38px;font-size:12px;color:#a3a3a3;font-weight:normal;">0.40</div>
<div class="t" style="left:741.8px;top:651.55px;font-size:12px;color:#a3a3a3;font-weight:normal;">1.40</div>
<div class="t" style="left:741.8px;top:671.71px;font-size:12px;color:#a3a3a3;font-weight:normal;">1.00</div>
<div class="t" style="left:741.8px;top:701.96px;font-size:12px;color:#a3a3a3;font-weight:normal;">0.40</div>
<div class="t" style="left:741.8px;top:704.04px;font-size:12px;color:rgba(150,150,150,0.6);font-weight:normal;">0.20</div>
<div class="t" style="left:683.7px;top:80.84px;font-size:12px;color:#a3a3a3;font-weight:normal;">1.40</div>
<div class="t" style="left:683.7px;top:96.84px;font-size:12px;color:#a3a3a3;font-weight:normal;">(63)</div>
<div class="t" style="left:741.8px;top:720.84px;font-size:12px;color:#a3a3a3;font-weight:normal;">(1)</div>
<svg style="left:762px;top:732px" width="14" height="14" viewBox="0 0 14 14"><path d="M13.30 8.91 L12.80 10.10 L10.90 10.20 L10.20 10.90 L10.10 12.80 L8.91 13.30 L7.49 12.02 L6.51 12.02 L5.09 13.30 L3.90 12.80 L3.80 10.90 L3.10 10.20 L1.20 10.10 L0.70 8.91 L1.98 7.49 L1.98 6.51 L0.70 5.09 L1.20 3.90 L3.10 3.80 L3.80 3.10 L3.90 1.20 L5.09 0.70 L6.51 1.98 L7.49 1.98 L8.91 0.70 L10.10 1.20 L10.20 3.10 L10.90 3.80 L12.80 3.90 L13.30 5.09 L12.02 6.51 L12.02 7.49Z" fill="none" stroke="#3d7bf5" stroke-width="1.4" stroke-linejoin="round"/><circle cx="7.0" cy="7.0" r="2.24" fill="none" stroke="#3d7bf5" stroke-width="1.4"/></svg>
<div style="position:absolute;left:784px;top:80px;width:399px;height:669px;background:#ffffff;"></div>
<div style="position:absolute;left:1183px;top:80px;width:16px;height:632px;background:#f0f0f0;"></div>
<div style="position:absolute;left:1190px;top:97px;width:2.4px;height:499px;background:#858585;"></div>
<div class="t" style="left:784.7px;top:82.00px;font-size:13px;color:#111;font-weight:normal;">Print settings:</div>
<div style="position:absolute;left:784px;top:99px;width:374px;height:22px;border:1px solid #7a7a7a;border-radius:2px;background:#ffffff;"></div>
<svg style="left:796px;top:104px" width="14" height="14" viewBox="0 0 14 14"><path d="M13.30 8.91 L12.80 10.10 L10.90 10.20 L10.20 10.90 L10.10 12.80 L8.91 13.30 L7.49 12.02 L6.51 12.02 L5.09 13.30 L3.90 12.80 L3.80 10.90 L3.10 10.20 L1.20 10.10 L0.70 8.91 L1.98 7.49 L1.98 6.51 L0.70 5.09 L1.20 3.90 L3.10 3.80 L3.80 3.10 L3.90 1.20 L5.09 0.70 L6.51 1.98 L7.49 1.98 L8.91 0.70 L10.10 1.20 L10.20 3.10 L10.90 3.80 L12.80 3.90 L13.30 5.09 L12.02 6.51 L12.02 7.49Z" fill="none" stroke="#4a7ef2" stroke-width="1.2" stroke-linejoin="round"/><circle cx="7.0" cy="7.0" r="2.24" fill="none" stroke="#4a7ef2" stroke-width="1.2"/></svg>
<svg style="left:819px;top:103.5px" width="12" height="15" viewBox="0 0 12 15"><path d="M2.6 6.5 V4.6 Q2.6 1.2 5.8 1.2 Q9 1.2 9 4.6 V6.5" fill="none" stroke="#7a7a7a" stroke-width="1.8"/><rect x="0.6" y="6.2" width="10.6" height="8" rx="1.2" fill="#7a7a7a"/><rect x="5" y="8.6" width="1.7" height="3.4" fill="#fff"/></svg>
<div class="t" style="left:838.3px;top:104.00px;font-size:13px;color:#111;font-weight:normal;">0.20mm Fine (modified)</div>
<svg style="left:1146.5px;top:109.5px" width="10" height="6"><path d="M0.6 0.8 L4.6 4.6 L8.6 0.8" fill="none" stroke="#333" stroke-width="1.1"/></svg>
<svg style="left:1164px;top:104px" width="14" height="14" viewBox="0 0 14 14"><path d="M13.30 8.91 L12.80 10.10 L10.90 10.20 L10.20 10.90 L10.10 12.80 L8.91 13.30 L7.49 12.02 L6.51 12.02 L5.09 13.30 L3.90 12.80 L3.80 10.90 L3.10 10.20 L1.20 10.10 L0.70 8.91 L1.98 7.49 L1.98 6.51 L0.70 5.09 L1.20 3.90 L3.10 3.80 L3.80 3.10 L3.90 1.20 L5.09 0.70 L6.51 1.98 L7.49 1.98 L8.91 0.70 L10.10 1.20 L10.20 3.10 L10.90 3.80 L12.80 3.90 L13.30 5.09 L12.02 6.51 L12.02 7.49Z" fill="none" stroke="#4a7ef2" stroke-width="1.3" stroke-linejoin="round"/><circle cx="7.0" cy="7.0" r="2.24" fill="none" stroke="#4a7ef2" stroke-width="1.3"/></svg>
<div class="t" style="left:784.7px;top:127.80px;font-size:13px;color:#111;font-weight:normal;">Filament:</div>
<div style="position:absolute;left:784px;top:145px;width:374px;height:22px;border:1px solid #7a7a7a;border-radius:2px;background:#ffffff;"></div>
<div style="position:absolute;left:791px;top:149px;width:22px;height:14px;background:#3a8ef6;border:1px solid #555;"></div>
<svg style="left:819px;top:149.5px" width="12" height="15" viewBox="0 0 12 15"><path d="M2.6 6.5 V4.6 Q2.6 1.2 5.8 1.2 Q9 1.2 9 4.6 V6.5" fill="none" stroke="#7a7a7a" stroke-width="1.8"/><rect x="0.6" y="6.2" width="10.6" height="8" rx="1.2" fill="#7a7a7a"/><rect x="5" y="8.6" width="1.7" height="3.4" fill="#fff"/></svg>
<div class="t" style="left:838.3px;top:150.00px;font-size:13px;color:#111;font-weight:normal;">QIDI PLA Rapido (modified)</div>
<svg style="left:1146.5px;top:155.5px" width="10" height="6"><path d="M0.6 0.8 L4.6 4.6 L8.6 0.8" fill="none" stroke="#333" stroke-width="1.1"/></svg>
<svg style="left:1164px;top:150px" width="14" height="14" viewBox="0 0 14 14"><path d="M13.30 8.91 L12.80 10.10 L10.90 10.20 L10.20 10.90 L10.10 12.80 L8.91 13.30 L7.49 12.02 L6.51 12.02 L5.09 13.30 L3.90 12.80 L3.80 10.90 L3.10 10.20 L1.20 10.10 L0.70 8.91 L1.98 7.49 L1.98 6.51 L0.70 5.09 L1.20 3.90 L3.10 3.80 L3.80 3.10 L3.90 1.20 L5.09 0.70 L6.51 1.98 L7.49 1.98 L8.91 0.70 L10.10 1.20 L10.20 3.10 L10.90 3.80 L12.80 3.90 L13.30 5.09 L12.02 6.51 L12.02 7.49Z" fill="none" stroke="#4a7ef2" stroke-width="1.3" stroke-linejoin="round"/><circle cx="7.0" cy="7.0" r="2.24" fill="none" stroke="#4a7ef2" stroke-width="1.3"/></svg>
<div class="t" style="left:784.7px;top:173.80px;font-size:13px;color:#111;font-weight:normal;">Printer:</div>
<div style="position:absolute;left:784px;top:191px;width:374px;height:22px;border:1px solid #7a7a7a;border-radius:2px;background:#ffffff;"></div>
<svg style="left:796px;top:196px" width="15" height="15" viewBox="0 0 15 15">
<rect x="0.6" y="0.6" width="13" height="13" fill="none" stroke="#4079f6" stroke-width="1.1"/>
<path d="M0.6 2.7 H13.6" stroke="#4079f6" stroke-width="1.1"/>
<path d="M5.6 3 H8.9 L8.2 5.1 H6.3 Z" fill="#4079f6"/>
<path d="M7.25 6.4 L9.9 7.7 V10.9 L7.25 12.3 L4.6 10.9 V7.7 Z M4.6 7.7 L7.25 9.1 L9.9 7.7 M7.25 9.1 V12.3" fill="none" stroke="#4079f6" stroke-width="1.15" stroke-linejoin="round"/>
</svg>
<svg style="left:819px;top:195.5px" width="12" height="15" viewBox="0 0 12 15"><path d="M2.6 6.5 V4.6 Q2.6 1.2 5.8 1.2 Q9 1.2 9 4.6 V6.5" fill="none" stroke="#7a7a7a" stroke-width="1.8"/><rect x="0.6" y="6.2" width="10.6" height="8" rx="1.2" fill="#7a7a7a"/><rect x="5" y="8.6" width="1.7" height="3.4" fill="#fff"/></svg>
<div class="t" style="left:838.3px;top:196.00px;font-size:13px;color:#111;font-weight:normal;">X-Plus 3 (modified)</div>
<svg style="left:1146.5px;top:201.5px" width="10" height="6"><path d="M0.6 0.8 L4.6 4.6 L8.6 0.8" fill="none" stroke="#333" stroke-width="1.1"/></svg>
<svg style="left:1164px;top:196px" width="14" height="14" viewBox="0 0 14 14"><path d="M13.30 8.91 L12.80 10.10 L10.90 10.20 L10.20 10.90 L10.10 12.80 L8.91 13.30 L7.49 12.02 L6.51 12.02 L5.09 13.30 L3.90 12.80 L3.80 10.90 L3.10 10.20 L1.20 10.10 L0.70 8.91 L1.98 7.49 L1.98 6.51 L0.70 5.09 L1.20 3.90 L3.10 3.80 L3.80 3.10 L3.90 1.20 L5.09 0.70 L6.51 1.98 L7.49 1.98 L8.91 0.70 L10.10 1.20 L10.20 3.10 L10.90 3.80 L12.80 3.90 L13.30 5.09 L12.02 6.51 L12.02 7.49Z" fill="none" stroke="#4a7ef2" stroke-width="1.3" stroke-linejoin="round"/><circle cx="7.0" cy="7.0" r="2.24" fill="none" stroke="#4a7ef2" stroke-width="1.3"/></svg>
<div class="t" style="left:785.6px;top:227.80px;font-size:13px;color:#111;font-weight:normal;">Supports:</div>
<div style="position:absolute;left:845px;top:223px;width:313px;height:22px;border:1px solid #7a7a7a;border-radius:2px;background:#ffffff;"></div>
<div class="t" style="left:858.9px;top:228.00px;font-size:13px;color:#111;font-weight:normal;">None</div>
<svg style="left:1146.5px;top:232px" width="10" height="6"><path d="M0.6 0.8 L4.6 4.6 L8.6 0.8" fill="none" stroke="#333" stroke-width="1.1"/></svg>
<div class="t" style="left:785.6px;top:256.00px;font-size:13px;color:#111;font-weight:normal;">Infill:</div>
<div style="position:absolute;left:816px;top:251px;width:78px;height:22px;border:1px solid #7a7a7a;border-radius:2px;background:#ffffff;"></div>
<div class="t" style="left:820.3px;top:256.00px;font-size:13px;color:#111;font-weight:normal;">15%</div>
<svg style="left:882.5px;top:260.5px" width="10" height="6"><path d="M0.6 0.8 L4.6 4.6 L8.6 0.8" fill="none" stroke="#333" stroke-width="1.1"/></svg>
<div class="t" style="left:918.8px;top:255.80px;font-size:13px;color:#111;font-weight:normal;">Brim:</div>
<div style="position:absolute;left:952px;top:257px;width:11px;height:11px;border:1px solid #777;border-radius:2.5px;background:#f2f2f2;"></div>
<div style="position:absolute;left:784px;top:282px;width:396px;height:223px;border:1px solid #5e5e5e;background:#ffffff;"></div>
<div style="position:absolute;left:1164px;top:283px;width:17px;height:223px;background:#f0f0f0;"></div>
<div style="position:absolute;left:1172px;top:321px;width:2px;height:168px;background:#858585;"></div>
<div style="position:absolute;left:984px;top:283px;width:1px;height:24px;background:#e6e6e6;"></div>
<div style="position:absolute;left:1014px;top:283px;width:1px;height:24px;background:#e6e6e6;"></div>
<div class="t" style="left:791.9px;top:288.00px;font-size:13px;color:#111;font-weight:normal;">Name</div>
<div class="t" style="left:1069.3px;top:288.50px;font-size:13px;color:#111;font-weight:normal;">Editing</div>
<div style="position:absolute;left:785px;top:307px;width:378px;height:184px;background:#dad8d9;"></div>
<div class="t" style="left:804.4px;top:311.80px;font-size:13px;color:#fafafa;font-weight:normal;">flowrate_5</div>
<svg style="left:993px;top:312.6px" width="14" height="10" viewBox="0 0 14 10"><path d="M0.7 5 Q7 -1.6 13.3 5 Q7 11.6 0.7 5 Z" fill="none" stroke="#808080" stroke-width="1.2"/><circle cx="7" cy="5" r="1.9" fill="#8a8a8a"/></svg>
<svg style="left:1082px;top:311.1px" width="15" height="14" viewBox="0 0 15 14"><rect x="0.5" y="3.1" width="10.3" height="10.3" rx="1.6" fill="#4a7ef2"/><circle cx="10" cy="3.5" r="4.7" fill="#dad8d9"/><circle cx="10" cy="3.5" r="2.6" fill="none" stroke="#4a7ef2" stroke-width="1.7"/><path d="M10 0.1 V6.9 M6.6 3.5 H13.4 M7.6 1.1 L12.4 5.9 M12.4 1.1 L7.6 5.9" stroke="#4a7ef2" stroke-width="1.2"/><circle cx="10" cy="3.5" r="1.15" fill="#dad8d9"/></svg>
<div class="t" style="left:804.4px;top:334.80px;font-size:13px;color:#fafafa;font-weight:normal;">flowrate_10</div>
<svg style="left:993px;top:335.6px" width="14" height="10" viewBox="0 0 14 10"><path d="M0.7 5 Q7 -1.6 13.3 5 Q7 11.6 0.7 5 Z" fill="none" stroke="#808080" stroke-width="1.2"/><circle cx="7" cy="5" r="1.9" fill="#8a8a8a"/></svg>
<svg style="left:1082px;top:334.1px" width="15" height="14" viewBox="0 0 15 14"><rect x="0.5" y="3.1" width="10.3" height="10.3" rx="1.6" fill="#4a7ef2"/><circle cx="10" cy="3.5" r="4.7" fill="#dad8d9"/><circle cx="10" cy="3.5" r="2.6" fill="none" stroke="#4a7ef2" stroke-width="1.7"/><path d="M10 0.1 V6.9 M6.6 3.5 H13.4 M7.6 1.1 L12.4 5.9 M12.4 1.1 L7.6 5.9" stroke="#4a7ef2" stroke-width="1.2"/><circle cx="10" cy="3.5" r="1.15" fill="#dad8d9"/></svg>
<div class="t" style="left:804.4px;top:357.80px;font-size:13px;color:#fafafa;font-weight:normal;">flowrate_15</div>
<svg style="left:993px;top:358.6px" width="14" height="10" viewBox="0 0 14 10"><path d="M0.7 5 Q7 -1.6 13.3 5 Q7 11.6 0.7 5 Z" fill="none" stroke="#808080" stroke-width="1.2"/><circle cx="7" cy="5" r="1.9" fill="#8a8a8a"/></svg>
<svg style="left:1082px;top:357.1px" width="15" height="14" viewBox="0 0 15 14"><rect x="0.5" y="3.1" width="10.3" height="10.3" rx="1.6" fill="#4a7ef2"/><circle cx="10" cy="3.5" r="4.7" fill="#dad8d9"/><circle cx="10" cy="3.5" r="2.6" fill="none" stroke="#4a7ef2" stroke-width="1.7"/><path d="M10 0.1 V6.9 M6.6 3.5 H13.4 M7.6 1.1 L12.4 5.9 M12.4 1.1 L7.6 5.9" stroke="#4a7ef2" stroke-width="1.2"/><circle cx="10" cy="3.5" r="1.15" fill="#dad8d9"/></svg>
<div class="t" style="left:804.4px;top:380.80px;font-size:13px;color:#fafafa;font-weight:normal;">flowrate_20</div>
<svg style="left:993px;top:381.6px" width="14" height="10" viewBox="0 0 14 10"><path d="M0.7 5 Q7 -1.6 13.3 5 Q7 11.6 0.7 5 Z" fill="none" stroke="#808080" stroke-width="1.2"/><circle cx="7" cy="5" r="1.9" fill="#8a8a8a"/></svg>
<svg style="left:1082px;top:380.1px" width="15" height="14" viewBox="0 0 15 14"><rect x="0.5" y="3.1" width="10.3" height="10.3" rx="1.6" fill="#4a7ef2"/><circle cx="10" cy="3.5" r="4.7" fill="#dad8d9"/><circle cx="10" cy="3.5" r="2.6" fill="none" stroke="#4a7ef2" stroke-width="1.7"/><path d="M10 0.1 V6.9 M6.6 3.5 H13.4 M7.6 1.1 L12.4 5.9 M12.4 1.1 L7.6 5.9" stroke="#4a7ef2" stroke-width="1.2"/><circle cx="10" cy="3.5" r="1.15" fill="#dad8d9"/></svg>
<div class="t" style="left:804.4px;top:403.80px;font-size:13px;color:#fafafa;font-weight:normal;">flowrate_m5</div>
<svg style="left:993px;top:404.6px" width="14" height="10" viewBox="0 0 14 10"><path d="M0.7 5 Q7 -1.6 13.3 5 Q7 11.6 0.7 5 Z" fill="none" stroke="#808080" stroke-width="1.2"/><circle cx="7" cy="5" r="1.9" fill="#8a8a8a"/></svg>
<svg style="left:1082px;top:403.1px" width="15" height="14" viewBox="0 0 15 14"><rect x="0.5" y="3.1" width="10.3" height="10.3" rx="1.6" fill="#4a7ef2"/><circle cx="10" cy="3.5" r="4.7" fill="#dad8d9"/><circle cx="10" cy="3.5" r="2.6" fill="none" stroke="#4a7ef2" stroke-width="1.7"/><path d="M10 0.1 V6.9 M6.6 3.5 H13.4 M7.6 1.1 L12.4 5.9 M12.4 1.1 L7.6 5.9" stroke="#4a7ef2" stroke-width="1.2"/><circle cx="10" cy="3.5" r="1.15" fill="#dad8d9"/></svg>
<div class="t" style="left:804.4px;top:426.80px;font-size:13px;color:#fafafa;font-weight:normal;">flowrate_m10</div>
<svg style="left:993px;top:427.6px" width="14" height="10" viewBox="0 0 14 10"><path d="M0.7 5 Q7 -1.6 13.3 5 Q7 11.6 0.7 5 Z" fill="none" stroke="#808080" stroke-width="1.2"/><circle cx="7" cy="5" r="1.9" fill="#8a8a8a"/></svg>
<svg style="left:1082px;top:426.1px" width="15" height="14" viewBox="0 0 15 14"><rect x="0.5" y="3.1" width="10.3" height="10.3" rx="1.6" fill="#4a7ef2"/><circle cx="10" cy="3.5" r="4.7" fill="#dad8d9"/><circle cx="10" cy="3.5" r="2.6" fill="none" stroke="#4a7ef2" stroke-width="1.7"/><path d="M10 0.1 V6.9 M6.6 3.5 H13.4 M7.6 1.1 L12.4 5.9 M12.4 1.1 L7.6 5.9" stroke="#4a7ef2" stroke-width="1.2"/><circle cx="10" cy="3.5" r="1.15" fill="#dad8d9"/></svg>
<div class="t" style="left:804.4px;top:449.80px;font-size:13px;color:#fafafa;font-weight:normal;">flowrate_m15</div>
<svg style="left:993px;top:450.6px" width="14" height="10" viewBox="0 0 14 10"><path d="M0.7 5 Q7 -1.6 13.3 5 Q7 11.6 0.7 5 Z" fill="none" stroke="#808080" stroke-width="1.2"/><circle cx="7" cy="5" r="1.9" fill="#8a8a8a"/></svg>
<svg style="left:1082px;top:449.1px" width="15" height="14" viewBox="0 0 15 14"><rect x="0.5" y="3.1" width="10.3" height="10.3" rx="1.6" fill="#4a7ef2"/><circle cx="10" cy="3.5" r="4.7" fill="#dad8d9"/><circle cx="10" cy="3.5" r="2.6" fill="none" stroke="#4a7ef2" stroke-width="1.7"/><path d="M10 0.1 V6.9 M6.6 3.5 H13.4 M7.6 1.1 L12.4 5.9 M12.4 1.1 L7.6 5.9" stroke="#4a7ef2" stroke-width="1.2"/><circle cx="10" cy="3.5" r="1.15" fill="#dad8d9"/></svg>
<div class="t" style="left:804.4px;top:472.80px;font-size:13px;color:#fafafa;font-weight:normal;">flowrate_m20</div>
<svg style="left:993px;top:473.6px" width="14" height="10" viewBox="0 0 14 10"><path d="M0.7 5 Q7 -1.6 13.3 5 Q7 11.6 0.7 5 Z" fill="none" stroke="#808080" stroke-width="1.2"/><circle cx="7" cy="5" r="1.9" fill="#8a8a8a"/></svg>
<svg style="left:1082px;top:472.1px" width="15" height="14" viewBox="0 0 15 14"><rect x="0.5" y="3.1" width="10.3" height="10.3" rx="1.6" fill="#4a7ef2"/><circle cx="10" cy="3.5" r="4.7" fill="#dad8d9"/><circle cx="10" cy="3.5" r="2.6" fill="none" stroke="#4a7ef2" stroke-width="1.7"/><path d="M10 0.1 V6.9 M6.6 3.5 H13.4 M7.6 1.1 L12.4 5.9 M12.4 1.1 L7.6 5.9" stroke="#4a7ef2" stroke-width="1.2"/><circle cx="10" cy="3.5" r="1.15" fill="#dad8d9"/></svg>
<div style="position:absolute;left:784px;top:520px;width:397px;height:178px;border:1px solid #dcdcdc;"></div>
<div style="position:absolute;left:791px;top:515px;width:133px;height:10px;background:#ffffff;"></div>
<div class="t" style="left:797.3px;top:514.00px;font-size:13px;color:#111;font-weight:bold;">Group manipulation</div>
<div class="t" style="left:906.0px;top:539.70px;font-size:13px;color:#111;font-weight:bold;">X</div>
<svg style="left:919px;top:540.5px" width="14" height="13" viewBox="0 0 14 13"><path d="M6 1.6 H2.6 Q1.3 1.6 1.3 2.9 V10.1 Q1.3 11.4 2.6 11.4 H6 M8 1.6 H11.4 Q12.7 1.6 12.7 2.9 V10.1 Q12.7 11.4 11.4 11.4 H8" fill="none" stroke="#111" stroke-width="2"/><path d="M7 0.2 V2.2 M7 5 V8 M7 10.8 V12.8" stroke="#a8a8a8" stroke-width="1.1"/></svg>
<div class="t" style="left:969.2px;top:539.70px;font-size:13px;color:#111;font-weight:bold;">Y</div>
<svg style="left:982px;top:540.5px" width="14" height="13" viewBox="0 0 14 13"><path d="M6 1.6 H2.6 Q1.3 1.6 1.3 2.9 V10.1 Q1.3 11.4 2.6 11.4 H6 M8 1.6 H11.4 Q12.7 1.6 12.7 2.9 V10.1 Q12.7 11.4 11.4 11.4 H8" fill="none" stroke="#111" stroke-width="2"/><path d="M7 0.2 V2.2 M7 5 V8 M7 10.8 V12.8" stroke="#a8a8a8" stroke-width="1.1"/></svg>
<div class="t" style="left:1031.8px;top:539.70px;font-size:13px;color:#111;font-weight:bold;">Z</div>
<svg style="left:1045px;top:540.5px" width="14" height="13" viewBox="0 0 14 13"><path d="M6 1.6 H2.6 Q1.3 1.6 1.3 2.9 V10.1 Q1.3 11.4 2.6 11.4 H6 M8 1.6 H11.4 Q12.7 1.6 12.7 2.9 V10.1 Q12.7 11.4 11.4 11.4 H8" fill="none" stroke="#111" stroke-width="2"/><path d="M7 0.2 V2.2 M7 5 V8 M7 10.8 V12.8" stroke="#a8a8a8" stroke-width="1.1"/></svg>
<div class="t" style="left:793.5px;top:567.50px;font-size:13px;color:#111;font-weight:normal;letter-spacing:-0.2px;">Translate:</div>
<div style="position:absolute;left:890px;top:563px;width:58px;height:22px;border:1px solid #6e6e6e;background:#f6dcdc;"></div>
<div class="t" style="left:894.3px;top:566.60px;font-size:13px;color:#111;font-weight:normal;">0</div>
<div style="position:absolute;left:953px;top:563px;width:58px;height:22px;border:1px solid #6e6e6e;background:#ddf3dc;"></div>
<div class="t" style="left:957.3px;top:566.60px;font-size:13px;color:#111;font-weight:normal;">0</div>
<div style="position:absolute;left:1016px;top:563px;width:58px;height:22px;border:1px solid #6e6e6e;background:#dcdcf3;"></div>
<div class="t" style="left:1020.3px;top:566.60px;font-size:13px;color:#111;font-weight:normal;">0</div>
<div class="t" style="left:1079.5px;top:567.50px;font-size:13px;color:#111;font-weight:normal;">mm</div>
<div class="t" style="left:793.5px;top:595.50px;font-size:13px;color:#111;font-weight:normal;letter-spacing:-0.2px;">Rotate:</div>
<div style="position:absolute;left:890px;top:591px;width:58px;height:22px;border:1px solid #6e6e6e;background:#f6dcdc;"></div>
<div class="t" style="left:894.3px;top:594.60px;font-size:13px;color:#111;font-weight:normal;">0</div>
<div style="position:absolute;left:953px;top:591px;width:58px;height:22px;border:1px solid #6e6e6e;background:#ddf3dc;"></div>
<div class="t" style="left:957.3px;top:594.60px;font-size:13px;color:#111;font-weight:normal;">0</div>
<div style="position:absolute;left:1016px;top:591px;width:58px;height:22px;border:1px solid #6e6e6e;background:#dcdcf3;"></div>
<div class="t" style="left:1020.3px;top:594.60px;font-size:13px;color:#111;font-weight:normal;">0</div>
<div class="t" style="left:1079.5px;top:595.50px;font-size:13px;color:#111;font-weight:normal;">°</div>
<div class="t" style="left:813.3px;top:623.50px;font-size:13px;color:#111;font-weight:normal;letter-spacing:-0.2px;">Scale:</div>
<div style="position:absolute;left:890px;top:619px;width:58px;height:22px;border:1px solid #6e6e6e;background:#f6dcdc;"></div>
<div class="t" style="left:894.3px;top:622.60px;font-size:13px;color:#111;font-weight:normal;">100</div>
<div style="position:absolute;left:953px;top:619px;width:58px;height:22px;border:1px solid #6e6e6e;background:#ddf3dc;"></div>
<div class="t" style="left:957.3px;top:622.60px;font-size:13px;color:#111;font-weight:normal;">100</div>
<div style="position:absolute;left:1016px;top:619px;width:58px;height:22px;border:1px solid #6e6e6e;background:#dcdcf3;"></div>
<div class="t" style="left:1020.3px;top:622.60px;font-size:13px;color:#111;font-weight:normal;">100</div>
<div class="t" style="left:1079.5px;top:623.50px;font-size:13px;color:#111;font-weight:normal;">%</div>
<div class="t" style="left:813.3px;top:651.50px;font-size:13px;color:#111;font-weight:normal;letter-spacing:-0.2px;">Size [World]:</div>
<div style="position:absolute;left:890px;top:647px;width:58px;height:22px;border:1px solid #6e6e6e;background:#f6dcdc;"></div>
<div class="t" style="left:894.3px;top:650.60px;font-size:13px;color:#111;font-weight:normal;">130</div>
<div style="position:absolute;left:953px;top:647px;width:58px;height:22px;border:1px solid #6e6e6e;background:#ddf3dc;"></div>
<div class="t" style="left:957.3px;top:650.60px;font-size:13px;color:#111;font-weight:normal;">100</div>
<div style="position:absolute;left:1016px;top:647px;width:58px;height:22px;border:1px solid #6e6e6e;background:#dcdcf3;"></div>
<div class="t" style="left:1020.3px;top:650.60px;font-size:13px;color:#111;font-weight:normal;">1.4</div>
<div class="t" style="left:1079.5px;top:651.50px;font-size:13px;color:#111;font-weight:normal;">mm</div>
<svg style="left:795px;top:637.5px" width="12" height="15" viewBox="0 0 12 15"><path d="M2.6 6.5 V4.6 Q2.6 1.2 5.8 1.2 Q9 1.2 9 4.6 V6.5" fill="none" stroke="#7a7a7a" stroke-width="1.8"/><rect x="0.6" y="6.2" width="10.6" height="8" rx="1.2" fill="#7a7a7a"/><rect x="5" y="8.6" width="1.7" height="3.4" fill="#fff"/></svg>
<div style="position:absolute;left:793px;top:677px;width:11px;height:11px;border:1px solid #777;border-radius:2.5px;background:#f2f2f2;"></div>
<div class="t" style="left:809.6px;top:676.60px;font-size:13px;color:#111;font-weight:normal;">Inches</div>
<div style="position:absolute;left:784px;top:700px;width:399px;height:11.5px;overflow:hidden;"><div class="t" style="left:9.3px;top:7.60px;font-size:13px;color:#111;font-weight:bold;">Sliced Info</div>
</div>
<div style="position:absolute;left:784px;top:717px;width:378px;height:32px;background:#b4c9f9;"></div>
<div class="t" style="left:929.2px;top:726.00px;font-size:13px;color:#111;font-weight:bold;letter-spacing:-0.25px;">Export G-code</div>
<div style="position:absolute;left:1167px;top:717px;width:32px;height:32px;background:#b4c9f9;"></div>
<svg style="left:1175px;top:719px" width="16" height="28" viewBox="0 0 16 28">
<rect x="0.2" y="0.6" width="15.5" height="18.4" rx="2" fill="#4a7ef2"/>
<rect x="2.3" y="19" width="11.7" height="8" fill="#7a7a7a"/>
<rect x="4" y="21.5" width="3" height="2.6" fill="#dcdcdc"/><rect x="8.6" y="21.5" width="3" height="2.6" fill="#dcdcdc"/>
</svg>
</div></div></body></html>
